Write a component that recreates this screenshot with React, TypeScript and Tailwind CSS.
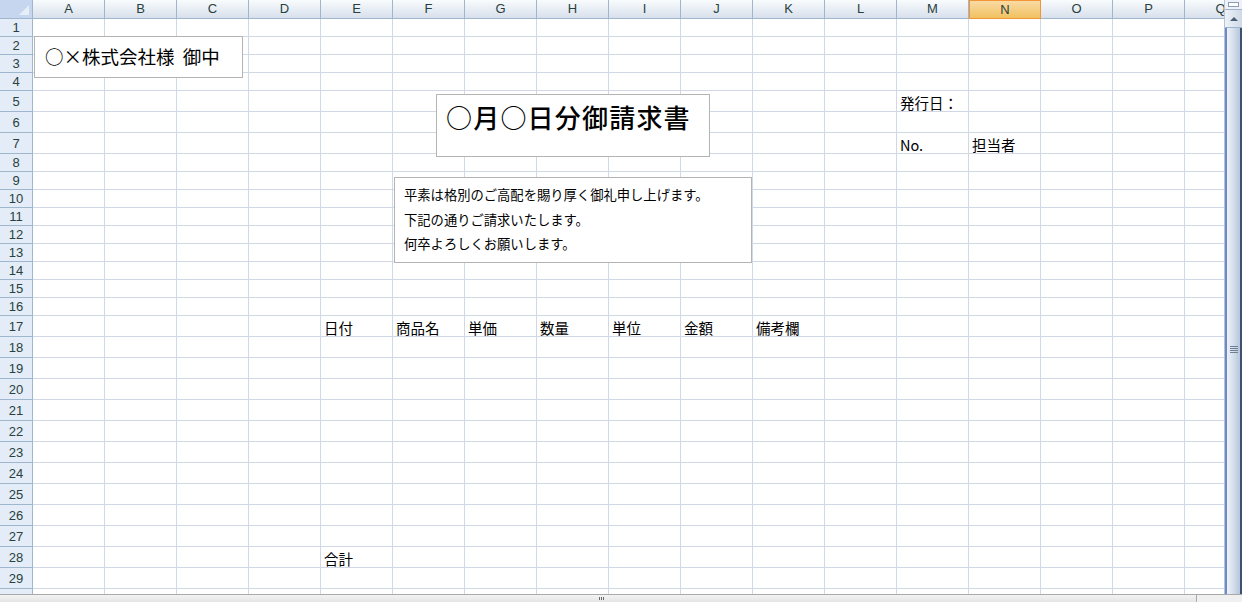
import React from "react";

const COLS = ["A", "B", "C", "D", "E", "F", "G", "H", "I", "J", "K", "L", "M", "N", "O", "P", "Q"];

// row heights incl. the bottom gridline (taken from the sheet)
const ROWS: number[] = [
  18, 18, 18, 18, 21, 21, 21, 18, 18, 18, 18, 18, 18, 18, 18, 18,
  21, 21, 21, 21, 21, 21, 21, 21, 21, 21, 21, 21, 21, 21,
];

const cells: Record<string, string> = {
  M5: "発行日：",
  M7: "No.",
  N7: "担当者",
  E17: "日付",
  F17: "商品名",
  G17: "単価",
  H17: "数量",
  I17: "単位",
  J17: "金額",
  K17: "備考欄",
  E28: "合計",
};

const jp = "font-['Noto_Sans_CJK_JP',sans-serif]";

const ColumnHeader = () => (
  <div className="flex h-[19px] shrink-0">
    <div className="relative w-[33px] shrink-0 h-full bg-[#c5d6ee] border-r border-b border-[#9eb6ce]">
      <div className="absolute right-[3px] bottom-[3px] w-0 h-0 border-l-[10px] border-l-transparent border-b-[10px] border-b-[#e8eef7]" />
    </div>
    {COLS.map((c) =>
      c === "N" ? (
        <div
          key={c}
          className="w-[72px] shrink-0 h-full flex items-center justify-center border border-[#f29536] bg-gradient-to-b from-[#f9dba3] to-[#f1c15f] text-[13px] text-[#27413e] font-['Liberation_Sans',sans-serif]"
        >
          {c}
        </div>
      ) : (
        <div
          key={c}
          className="w-[72px] shrink-0 h-full flex items-center justify-center border-r border-b border-[#9eb6ce] bg-gradient-to-b from-[#f9fcfd] to-[#d8e0ec] text-[13px] text-[#27413e] font-['Liberation_Sans',sans-serif]"
        >
          {c}
        </div>
      )
    )}
  </div>
);

const SheetRow = ({ n, h }: { n: number; h: number }) => (
  <div className={`flex shrink-0 ${h === 21 ? "h-[21px]" : "h-[18px]"}`}>
    <div className="w-[33px] shrink-0 h-full flex items-center justify-center pt-[1px] bg-[#e4ecf7] border-r border-b border-[#9eb6ce] text-[13px] text-[#27413e] font-['Liberation_Sans',sans-serif]">
      {n < 30 ? n : ""}
    </div>
    {COLS.map((c) => (
      <div
        key={c}
        className={`w-[72px] shrink-0 h-full flex items-end pl-[3px] border-r border-b border-[#d0d7e5] text-[14.5px] leading-[16px] text-black whitespace-nowrap overflow-visible ${jp}`}
      >
        {cells[`${c}${n}`] ?? ""}
      </div>
    ))}
  </div>
);

const VScroll = () => (
  <div className="w-[18px] shrink-0 h-full flex flex-col bg-[#e9eef5] border-l border-[#b5c4da]">
    <div className="h-[9px] shrink-0 flex items-center justify-center bg-[#eef2f8]">
      <div className="w-[11px] h-[5px] border border-[#8a9cb8] bg-white" />
    </div>
    <div className="h-[19px] shrink-0 flex items-center justify-center bg-gradient-to-r from-[#eef2f8] to-[#cfd9e8] border-y border-[#9fb2cf]">
      <div className="w-0 h-0 border-l-[4px] border-r-[4px] border-b-[4px] border-l-transparent border-r-transparent border-b-[#4c5d78]" />
    </div>
    <div className="flex-1 flex justify-center pt-[318px] border-l-2 border-[#6d8ac2] border-r-2 border-r-[#3d506e] bg-gradient-to-r from-[#eef2f8] via-[#d4deec] to-[#b7c6dc]">
      <div className="flex flex-col gap-[1px]">
        <div className="w-[8px] h-[1px] bg-[#6f7f96]" />
        <div className="w-[8px] h-[1px] bg-[#6f7f96]" />
        <div className="w-[8px] h-[1px] bg-[#6f7f96]" />
        <div className="w-[8px] h-[1px] bg-[#6f7f96]" />
      </div>
    </div>
  </div>
);

const BottomBar = () => (
  <div className="h-[8px] shrink-0 flex border-t border-[#a9a9a9] bg-gradient-to-b from-[#f4f4f4] to-[#e4e4e4]">
    <div className="w-[1197px] shrink-0 flex justify-center border-r border-[#a9a9a9]">
      <div className="flex gap-[1px] pt-[2px] pl-[6px]">
        <div className="w-[1px] h-[3px] bg-[#6b6b6b]" />
        <div className="w-[1px] h-[3px] bg-[#6b6b6b]" />
        <div className="w-[1px] h-[3px] bg-[#6b6b6b]" />
      </div>
    </div>
    <div className="flex-1 bg-[#f0f0f0]" />
  </div>
);

export default function App() {
  return (
    <div className="w-[1242px] h-[602px] overflow-hidden flex flex-col bg-white">
      <div className="flex flex-1 min-h-0">
        <div className="relative flex-1 min-w-0 overflow-hidden flex flex-col">
          <ColumnHeader />
          {ROWS.map((h, i) => (
            <SheetRow key={i} n={i + 1} h={h} />
          ))}

          {/* shapes floating over the sheet */}
          <div
            className={`absolute left-[34px] top-[36px] w-[209px] h-[42px] bg-white border border-[#b4b4b4] flex items-center pl-[10px] text-[18.5px] text-black ${jp}`}
          >
            ○×株式会社様&nbsp;&nbsp;御中
          </div>
          <div
            className={`absolute left-[436px] top-[94px] w-[274px] h-[63px] bg-white border border-[#b4b4b4] pl-[9px] pt-[5px] text-[26px] leading-[34px] font-medium tracking-[1.2px] text-black ${jp}`}
          >
            ○月○日分御請求書
          </div>
          <div
            className={`absolute left-[394px] top-[177px] w-[358px] h-[86px] bg-white border border-[#b4b4b4] pl-[9px] pt-[5px] text-[13.3px] leading-[24.5px] text-black ${jp}`}
          >
            <div>平素は格別のご高配を賜り厚く御礼申し上げます。</div>
            <div>下記の通りご請求いたします。</div>
            <div>何卒よろしくお願いします。</div>
          </div>
        </div>
        <VScroll />
      </div>
      <BottomBar />
    </div>
  );
}
